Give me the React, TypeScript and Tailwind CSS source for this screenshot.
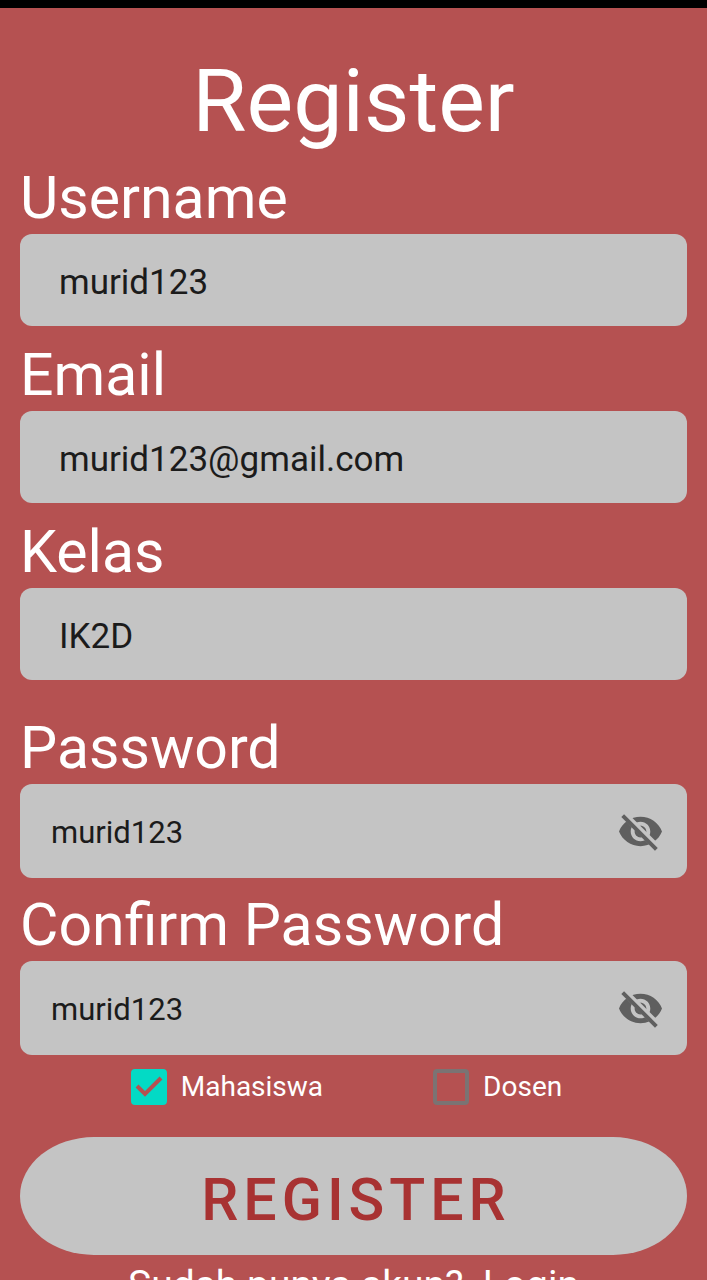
import { useState } from "react";

function TextField({ id, label, value, type = "text" }: { id: string; label: string; value: string; type?: string }) {
  return (
    <div className="flex flex-col">
      <label htmlFor={id} className="pt-[6px] text-[59px] leading-[72px]">{label}</label>
      <input id={id} type={type} defaultValue={value} className="h-[92px] w-full rounded-xl bg-[#c4c4c4] px-[39px] pt-1 text-[35px] text-[#1b1b1b] outline-none" />
    </div>
  );
}

function PasswordField({ id, label, value }: { id: string; label: string; value: string }) {
  const [visible, setVisible] = useState(true);
  return (
    <div className="flex flex-col">
      <label htmlFor={id} className="pt-[6px] text-[59px] leading-[72px]">{label}</label>
      <div className="flex h-[94px] items-center rounded-xl bg-[#c4c4c4] pr-[23px] pl-[31px]">
        <input id={id} type={visible ? "text" : "password"} defaultValue={value} className="h-full min-w-0 flex-1 bg-transparent pt-[2px] text-[31px] text-[#1b1b1b] outline-none" />
        <button type="button" aria-label="Toggle password visibility" onClick={() => setVisible(!visible)}>
          <svg viewBox="0 0 24 24" className="size-[47px] fill-[#5f5f5f]">
            <clipPath id={`${id}-eye`}>
              <path d="M2 4.27 19.73 22 22.27 19.46 4.54 1.73V1H23v22H1V4.27z" />
            </clipPath>
            <path
              clipPath={`url(#${id}-eye)`}
              fillRule="evenodd"
              d="M12 4.5C7 4.5 2.73 7.61 1 12c1.73 4.39 6 7.5 11 7.5s9.27-3.11 11-7.5c-1.73-4.39-6-7.5-11-7.5zM12 17c-2.76 0-5-2.24-5-5s2.24-5 5-5 5 2.24 5 5-2.24 5-5 5zm0-8c-1.66 0-3 1.34-3 3s1.34 3 3 3 3-1.34 3-3-1.34-3-3-3z"
            />
            <path d="M2.9 3.9 20.1 21.1" className="fill-none stroke-[#5f5f5f] stroke-[2]" />
          </svg>
        </button>
      </div>
    </div>
  );
}

function RoleOption({ label, checked }: { label: string; checked: boolean }) {
  return (
    <label className="flex items-center gap-[14px] text-[28px] leading-9">
      <span className="grid size-9 place-items-center">
        <input type="checkbox" defaultChecked={checked} className="peer col-start-1 row-start-1 size-9 appearance-none rounded-[4px] border-4 border-[#7b7373] checked:border-[#03dac5] checked:bg-[#03dac5]" />
        <svg viewBox="0 0 36 36" className="pointer-events-none invisible col-start-1 row-start-1 size-9 fill-none stroke-[#b55151] stroke-4 peer-checked:visible">
          <path d="M6 17l8 8L30 9" />
        </svg>
      </span>
      {label}
    </label>
  );
}

export default function App() {
  return (
    <main className="h-screen overflow-hidden border-t-8 border-black bg-[#b55151] font-[Roboto,sans-serif] text-white">
      <form className="flex flex-col px-5 pt-[38px]" onSubmit={(e) => e.preventDefault()}>
        <h1 className="text-center text-[88px] leading-[110px]">Register</h1>
        <div className="flex flex-col gap-[7px]">
          <TextField id="username" label="Username" value="murid123" />
          <TextField id="email" label="Email" value="murid123@gmail.com" type="email" />
          <TextField id="kelas" label="Kelas" value="IK2D" />
        </div>
        <div className="mt-[26px] flex flex-col gap-[5px]">
          <PasswordField id="password" label="Password" value="murid123" />
          <PasswordField id="confirm" label="Confirm Password" value="murid123" />
        </div>
        <div className="flex h-[82px] items-start justify-center gap-[110px] pt-[14px] pr-[14px]">
          <RoleOption label="Mahasiswa" checked />
          <RoleOption label="Dosen" checked={false} />
        </div>
        <button type="submit" className="h-[118px] rounded-[74px_/_59px] bg-[#c4c4c4] pt-2 pl-[5px] text-[59px] font-medium tracking-[5px] text-[#a83232]">REGISTER</button>
        <p className="pt-[7px] text-center text-[39px] leading-[46px] whitespace-pre">Sudah punya akun?  <a href="#login">Login</a></p>
      </form>
    </main>
  );
}
